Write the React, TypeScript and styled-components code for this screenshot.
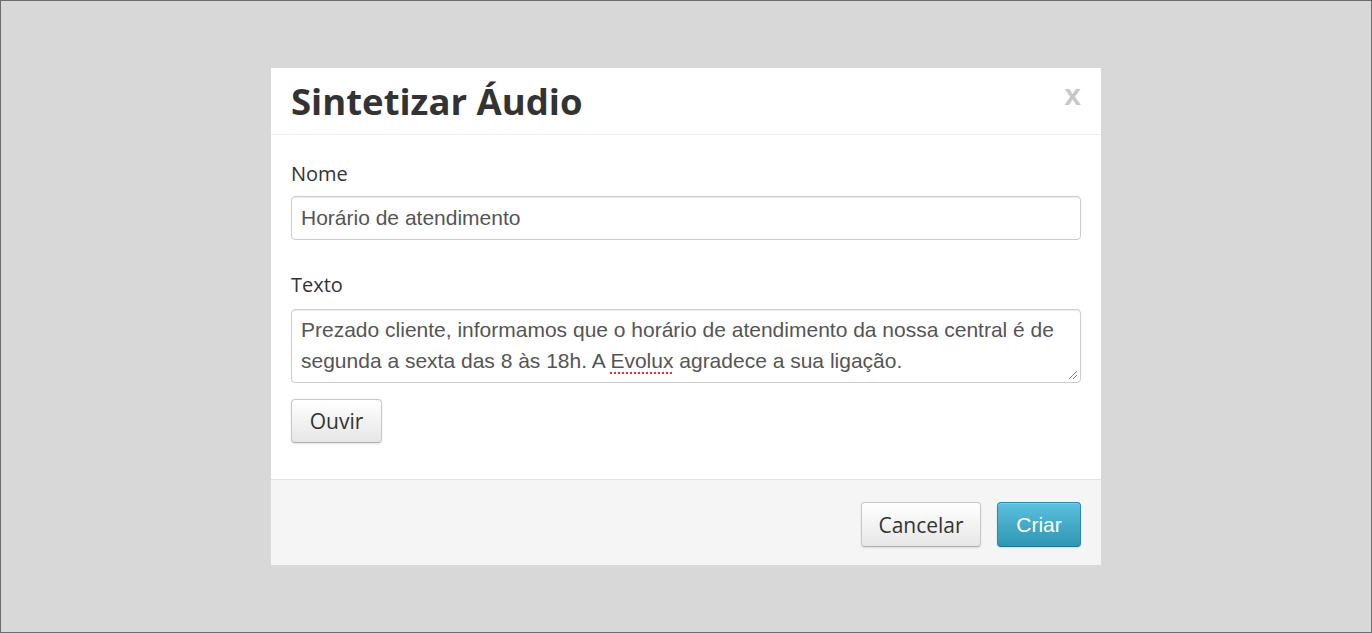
import React from 'react'
import styled, { createGlobalStyle } from 'styled-components'

const GlobalStyle = createGlobalStyle`
  html, body {
    margin: 0;
    padding: 0;
  }
  body {
    font-family: 'Open Sans', 'Liberation Sans', sans-serif;
    color: #333;
  }
`

const Backdrop = styled.div`
  box-sizing: border-box;
  width: 1372px;
  height: 633px;
  background: #d8d8d8;
  border: 1px solid #6c6c6c;
  padding-top: 67px;
  display: flex;
  justify-content: center;
  align-items: flex-start;
`

const Modal = styled.div`
  width: 830px;
  background: #fff;
  display: flex;
  flex-direction: column;
`

const Header = styled.div`
  position: relative;
  height: 66px;
  padding: 0 20px;
  display: flex;
  align-items: center;
  border-bottom: 1px solid #eee;
`

const Title = styled.h3`
  margin: 0;
  font-family: 'Open Sans', sans-serif;
  font-weight: 700;
  font-size: 36.5px;
  line-height: 40px;
  color: #333;
`

const Close = styled.button`
  position: absolute;
  right: 20px;
  top: 12px;
  border: 0;
  background: none;
  padding: 0;
  font-family: 'Liberation Sans', Arial, sans-serif;
  font-weight: 700;
  font-size: 30px;
  line-height: 30px;
  color: #c8c8c8;
  cursor: pointer;
`

const Body = styled.div`
  padding: 25px 20px 36px;
  display: flex;
  flex-direction: column;
  align-items: flex-start;
`

const Label = styled.label<{ $top?: number; $bottom?: number }>`
  display: block;
  font-size: 20px;
  line-height: 28px;
  margin-top: ${(p) => p.$top ?? 0}px;
  margin-bottom: ${(p) => p.$bottom ?? 8}px;
  color: #333;
`

const Field = styled.div`
  box-sizing: border-box;
  width: 790px;
  border: 1px solid #ccc;
  border-radius: 4px;
  box-shadow: inset 0 1px 1px rgba(0, 0, 0, 0.075);
  font-family: 'Liberation Sans', Arial, sans-serif;
  font-size: 21px;
  color: #555;
  background: #fff;
`

const Input = styled(Field)`
  height: 44px;
  line-height: 42px;
  padding: 0 9px;
`

const TextArea = styled(Field)`
  position: relative;
  height: 74px;
  padding: 4px 9px;
  line-height: 31px;
`

const Misspelled = styled.span`
  text-decoration: underline dotted #e03030;
  text-decoration-thickness: 2px;
  text-underline-offset: 4px;
`

const Grip = styled.svg`
  position: absolute;
  right: 2px;
  bottom: 2px;
`

const Button = styled.button<{ $primary?: boolean; $w: number }>`
  box-sizing: border-box;
  width: ${(p) => p.$w}px;
  height: 45px;
  border-radius: 4px;
  cursor: pointer;
  padding: 0;
  font-size: 21px;
  font-family: ${(p) =>
    p.$primary ? "'Liberation Sans', Arial, sans-serif" : "'Open Sans', sans-serif"};
  color: ${(p) => (p.$primary ? '#fff' : '#333')};
  border: 1px solid ${(p) => (p.$primary ? '#2a8bab' : '#c8c8c8')};
  border-bottom-color: ${(p) => (p.$primary ? '#1f7592' : '#b0b0b0')};
  background: ${(p) =>
    p.$primary
      ? 'linear-gradient(to bottom, #5bc0de, #2f96b4)'
      : 'linear-gradient(to bottom, #ffffff, #e6e6e6)'};
  box-shadow: inset 0 1px 0 rgba(255, 255, 255, 0.2), 0 1px 2px rgba(0, 0, 0, 0.12);
`

const Listen = styled(Button)`
  margin-top: 16px;
  height: 44px;
`

const Footer = styled.div`
  height: 86px;
  border-top: 1px solid #e2e2e2;
  background: #f5f5f5;
  padding: 22px 20px 0;
  box-sizing: border-box;
  display: flex;
  justify-content: flex-end;
  align-items: flex-start;
  gap: 16px;
`

export default function App() {
  return (
    <>
      <GlobalStyle />
      <Backdrop>
        <Modal>
          <Header>
            <Title>Sintetizar Áudio</Title>
            <Close aria-label="Fechar">x</Close>
          </Header>
          <Body>
            <Label>Nome</Label>
            <Input>Horário de atendimento</Input>
            <Label $top={31} $bottom={10}>Texto</Label>
            <TextArea>
              Prezado cliente, informamos que o horário de atendimento da nossa central é de
              segunda a sexta das 8 às 18h. A <Misspelled>Evolux</Misspelled> agradece a sua
              ligação.
              <Grip width="12" height="12" viewBox="0 0 12 12">
                <path d="M11 3 L3 11 M11 7 L7 11" stroke="#888" strokeWidth="1" />
              </Grip>
            </TextArea>
            <Listen $w={91}>Ouvir</Listen>
          </Body>
          <Footer>
            <Button $w={120}>Cancelar</Button>
            <Button $primary $w={84}>Criar</Button>
          </Footer>
        </Modal>
      </Backdrop>
    </>
  )
}
